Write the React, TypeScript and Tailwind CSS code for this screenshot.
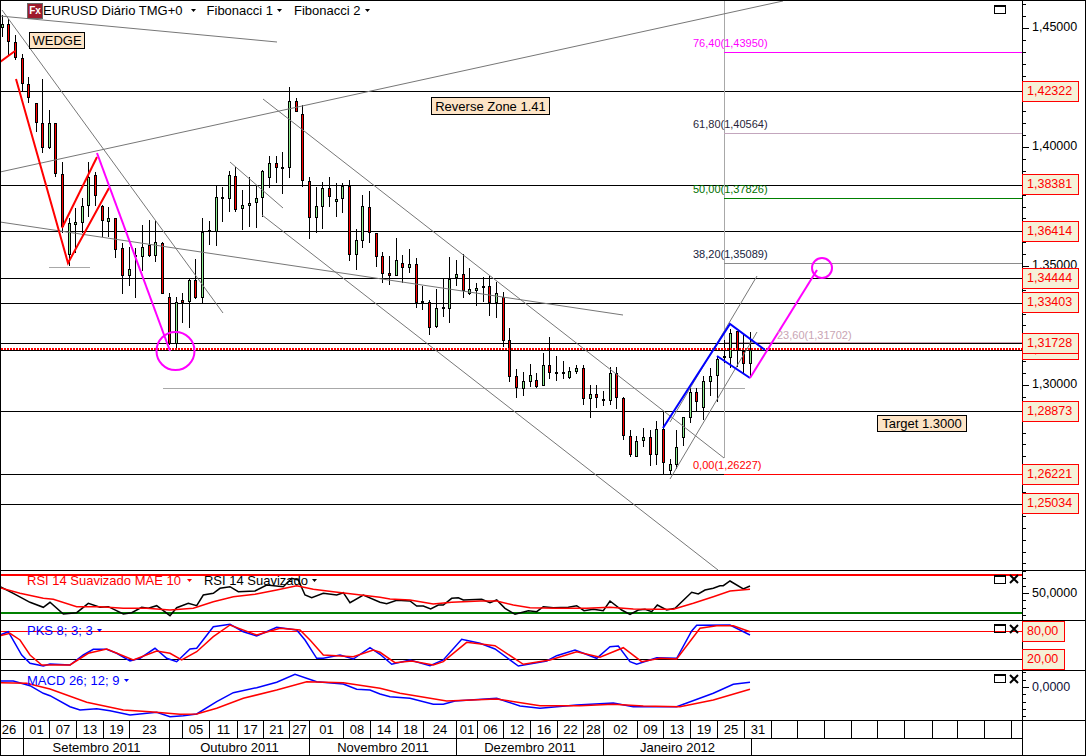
// EURUSD daily chart: main pane, three indicator panes, price axis and date rows

type Candle = [number, number, number, number, number, 'r' | 'g'];

// x, wick top, wick bottom, body top, body bottom, colour
const candles: Candle[] = [
  [2, 15, 37, 24, 28, 'g'], [8, 19, 55, 24, 42, 'r'], [15, 35, 60, 42, 58, 'r'], [22, 54, 92, 58, 84, 'r'],
  [28, 77, 103, 84, 98, 'r'], [36, 103, 132, 103, 123, 'r'], [42, 79, 153, 123, 148, 'r'], [49, 110, 149, 123, 148, 'g'],
  [55, 123, 177, 123, 174, 'r'], [62, 162, 233, 174, 227, 'r'], [69, 218, 266, 223, 255, 'g'], [75, 208, 253, 222, 225, 'g'],
  [82, 198, 233, 206, 223, 'g'], [88, 162, 217, 177, 206, 'g'], [95, 172, 206, 175, 196, 'r'], [102, 205, 237, 206, 221, 'r'],
  [108, 207, 237, 218, 222, 'g'], [115, 218, 258, 218, 250, 'r'], [122, 243, 294, 248, 276, 'r'], [129, 247, 286, 269, 276, 'g'],
  [135, 248, 298, 255, 257, 'r'], [142, 225, 271, 247, 257, 'g'], [149, 220, 257, 245, 256, 'r'], [155, 221, 262, 242, 256, 'g'],
  [162, 242, 294, 243, 294, 'r'], [169, 293, 345, 297, 344, 'r'], [176, 297, 350, 302, 344, 'g'], [182, 293, 323, 300, 303, 'r'],
  [189, 278, 328, 280, 302, 'g'], [195, 259, 299, 280, 298, 'r'], [202, 218, 303, 232, 298, 'g'], [209, 221, 245, 230, 232, 'r'],
  [216, 186, 246, 197, 232, 'g'], [222, 187, 222, 197, 199, 'r'], [229, 171, 212, 175, 199, 'g'], [235, 167, 212, 176, 210, 'r'],
  [242, 190, 230, 205, 209, 'g'], [249, 177, 227, 203, 206, 'g'], [256, 185, 228, 198, 203, 'g'], [262, 170, 217, 171, 198, 'g'],
  [269, 156, 188, 163, 178, 'g'], [276, 156, 183, 163, 168, 'r'], [282, 152, 194, 167, 169, 'r'], [289, 87, 178, 101, 168, 'g'],
  [296, 98, 112, 101, 112, 'r'], [302, 105, 187, 114, 181, 'r'], [309, 177, 239, 181, 218, 'r'], [316, 187, 233, 206, 218, 'g'],
  [322, 182, 229, 188, 207, 'g'], [329, 177, 207, 188, 197, 'r'], [336, 183, 217, 199, 202, 'g'], [342, 183, 213, 186, 199, 'g'],
  [349, 180, 261, 186, 255, 'r'], [356, 229, 270, 240, 255, 'g'], [362, 195, 248, 206, 241, 'g'], [369, 191, 243, 207, 233, 'r'],
  [376, 233, 267, 233, 257, 'r'], [382, 252, 283, 256, 274, 'r'], [389, 256, 285, 273, 276, 'r'], [396, 238, 276, 260, 276, 'g'],
  [402, 255, 283, 263, 268, 'r'], [409, 249, 273, 264, 268, 'g'], [416, 258, 308, 264, 303, 'r'], [422, 286, 310, 301, 303, 'g'],
  [429, 300, 335, 302, 328, 'r'], [436, 289, 328, 308, 327, 'g'], [443, 278, 317, 307, 309, 'r'], [449, 257, 323, 279, 309, 'g'],
  [456, 260, 286, 274, 278, 'g'], [463, 254, 298, 274, 291, 'r'], [469, 268, 295, 289, 294, 'g'], [476, 283, 306, 288, 291, 'g'],
  [483, 277, 302, 286, 288, 'g'], [489, 276, 316, 286, 303, 'r'], [496, 282, 318, 293, 303, 'g'], [503, 292, 347, 297, 341, 'r'],
  [509, 328, 382, 340, 377, 'r'], [516, 369, 398, 376, 388, 'r'], [523, 372, 396, 381, 389, 'g'], [530, 364, 387, 375, 382, 'g'],
  [536, 373, 388, 380, 387, 'r'], [543, 353, 386, 365, 386, 'g'], [549, 337, 379, 365, 373, 'r'], [556, 356, 381, 372, 374, 'g'],
  [563, 361, 379, 372, 374, 'r'], [569, 367, 379, 371, 378, 'g'], [576, 365, 374, 368, 372, 'g'], [583, 365, 405, 368, 399, 'r'],
  [590, 385, 418, 394, 399, 'g'], [596, 385, 408, 394, 398, 'r'], [603, 391, 406, 399, 401, 'g'], [610, 367, 405, 373, 401, 'g'],
  [616, 367, 409, 373, 398, 'r'], [623, 397, 440, 398, 436, 'r'], [630, 430, 457, 436, 455, 'r'], [636, 436, 457, 441, 457, 'g'],
  [643, 428, 447, 437, 441, 'g'], [650, 430, 466, 437, 455, 'r'], [656, 421, 465, 429, 455, 'g'], [663, 412, 474, 429, 463, 'r'],
  [670, 459, 474, 464, 471, 'g'], [676, 430, 469, 447, 465, 'g'], [683, 417, 446, 417, 438, 'g'], [690, 388, 423, 392, 418, 'g'],
  [696, 388, 411, 392, 402, 'r'], [703, 376, 420, 381, 408, 'g'], [710, 368, 396, 376, 382, 'g'], [717, 356, 402, 359, 376, 'g'],
  [724, 340, 363, 356, 358, 'g'], [730, 329, 368, 333, 358, 'g'], [737, 331, 367, 331, 351, 'r'], [743, 335, 373, 351, 364, 'r'],
  [750, 332, 378, 350, 364, 'g'],
];

const blackLevels = [91, 185, 231, 278, 303, 343, 350, 411, 504];

const trendLines = [
  [0, 16, 277, 42], [2, 10, 223, 313], [0, 172, 783, 1], [0, 222, 623, 315], [263, 99, 724, 458],
  [230, 162, 283, 208], [262, 215, 718, 570], [670, 422, 757, 276], [670, 479, 757, 332],
];

const fibLines = [
  { y: 52, color: '#ff00ff' },
  { y: 133, color: '#c3a6bd' },
  { y: 198, color: '#008000' },
  { y: 263, color: '#8a8a8a' },
  { y: 342, color: '#c9a5b4' },
  { y: 474, color: '#ff0000' },
];

// drawn in the zoom crops at 3x, so x and y get divided back down
const toPoints = (raw: number[][], panelTop: number) =>
  raw.map(([x, y]) => `${(x / 3).toFixed(1)},${(panelTop + y / 3).toFixed(1)}`).join(' ');

const shift = (raw: number[][]) => raw.map(([x, y]) => [x + 1140, y]);

const rsiBlack = [
  [0, 65], [40, 85], [90, 112], [130, 127], [150, 112], [190, 147], [230, 143], [265, 115], [300, 127], [325, 125],
  [370, 147], [395, 143], [425, 127], [445, 130], [470, 122], [510, 152], [530, 128], [565, 115], [590, 122], [610, 90],
  [640, 85], [660, 70], [690, 65], [715, 80], [765, 78], [800, 60], [850, 65], [875, 40], [895, 45], [915, 90],
  [935, 98], [970, 85], [1010, 90], [1030, 83], [1050, 113], [1090, 90], [1140, 112],
  ...shift([
    [20, 116], [50, 106], [90, 108], [110, 123], [130, 123], [152, 132], [175, 120], [190, 120], [215, 100], [235, 98],
    [250, 105], [305, 103], [330, 113], [350, 105], [375, 130], [405, 148], [445, 137], [470, 140], [490, 125], [520, 128],
    [565, 127], [590, 122], [612, 137], [640, 133], [670, 137], [690, 108], [725, 135], [750, 148], [775, 135], [795, 133],
    [815, 140], [832, 120], [860, 135], [885, 130], [935, 82], [955, 87], [975, 75], [1000, 70], [1020, 62], [1030, 62],
    [1050, 48], [1090, 72], [1110, 63],
  ]),
];
const rsiRed = [
  [0, 68], [60, 85], [130, 100], [160, 103], [230, 125], [300, 125], [370, 130], [440, 130], [510, 135], [580, 130],
  [640, 110], [700, 95], [765, 88], [830, 75], [890, 62], [940, 73], [1000, 80], [1140, 97],
  ...shift([
    [30, 102], [90, 105], [160, 117], [215, 112], [300, 108], [350, 108], [400, 120], [450, 128], [530, 130], [620, 130],
    [690, 127], [760, 132], [830, 133], [880, 133], [940, 115], [1000, 95], [1050, 78], [1110, 73],
  ]),
];
const pksBlue = [
  [0, 210], [25, 200], [45, 235], [65, 270], [90, 295], [130, 303], [150, 297], [210, 300], [250, 270], [280, 253],
  [320, 253], [350, 265], [390, 288], [420, 280], [465, 250], [500, 280], [530, 290], [570, 252], [590, 250], [640, 185],
  [690, 178], [730, 200], [770, 213], [830, 187], [890, 195], [915, 225], [950, 280], [970, 280], [1020, 270], [1060, 282],
  [1110, 248], [1140, 268],
  ...shift([
    [35, 298], [90, 285], [150, 302], [190, 285], [245, 223], [300, 235], [345, 252], [415, 303], [500, 288], [530, 272],
    [585, 255], [650, 280], [690, 245], [715, 243], [750, 290], [770, 298], [830, 278], [890, 280], [935, 198], [950, 181],
    [1050, 180], [1110, 210],
  ]),
];
const pksRed = [
  [0, 212], [30, 205], [60, 225], [90, 270], [125, 300], [210, 300], [265, 265], [320, 252], [400, 285], [470, 258],
  [510, 265], [545, 285], [590, 260], [640, 215], [690, 180], [770, 210], [840, 190], [900, 195], [930, 225], [970, 270],
  [1060, 275], [1120, 255], [1140, 262],
  ...shift([
    [45, 293], [95, 288], [160, 300], [190, 290], [260, 232], [345, 242], [430, 298], [510, 285], [590, 260], [660, 277],
    [730, 248], [785, 290], [840, 280], [890, 282], [960, 190], [1010, 182], [1060, 182], [1110, 200],
  ]),
];
const macdBlue = [
  [0, 348], [40, 348], [90, 362], [130, 385], [150, 392], [210, 425], [240, 435], [290, 431], [330, 437], [390, 450],
  [470, 442], [510, 455], [550, 452], [590, 447], [650, 410], [700, 383], [770, 368], [830, 352], [885, 328], [950, 350],
  [1030, 357], [1070, 373], [1110, 375], [1140, 387],
  ...shift([
    [30, 395], [90, 400], [160, 418], [190, 418], [225, 408], [350, 400], [420, 423], [480, 430], [590, 420], [700, 414],
    [760, 425], [890, 425], [1000, 385], [1060, 358], [1110, 352],
  ]),
];
const macdRed = [
  [0, 353], [80, 355], [150, 372], [260, 412], [370, 435], [450, 440], [540, 448], [590, 447], [650, 430], [730, 400],
  [830, 375], [920, 350], [1030, 353], [1140, 370],
  ...shift([
    [60, 385], [200, 408], [350, 402], [480, 422], [600, 422], [700, 418], [790, 423], [900, 425], [1000, 405], [1110, 373],
  ]),
];

const dates = [
  ['26', 'w-[23px] pr-[6px]'], ['01', 'w-[26px]'], ['07', 'w-[27px]'], ['13', 'w-[27px]'], ['19', 'w-[26px]'], ['23', 'w-[40px]'],
  ['', 'w-[13px]'], ['05', 'w-[27px]'], ['11', 'w-[28px]'], ['17', 'w-[26px]'], ['21', 'w-[26px]'], ['27', 'w-[20px]'],
  ['01', 'w-[34px]'], ['08', 'w-[27px]'], ['14', 'w-[27px]'], ['18', 'w-[26px]'], ['24', 'w-[33px]'], ['01', 'w-[21px]'],
  ['06', 'w-[26px]'], ['12', 'w-[27px]'], ['16', 'w-[27px]'], ['22', 'w-[26px]'], ['28', 'w-[20px]'], ['02', 'w-[34px]'],
  ['09', 'w-[26px]'], ['13', 'w-[27px]'], ['19', 'w-[27px]'], ['25', 'w-[27px]'], ['31', 'w-[27px]'], ['', 'w-[26px]'],
  ['', 'w-[27px]'], ['', 'w-[27px]'], ['', 'w-[26px]'], ['', 'w-[27px]'], ['', 'w-[28px]'], ['', 'w-[25px]'], ['', 'w-[27px]'], ['', 'w-[27px]'],
];

const months = [
  ['', 'w-[23px]'], ['Setembro 2011', 'w-[146px]'], ['Outubro 2011', 'w-[140px]'], ['Novembro 2011', 'w-[147px]'],
  ['Dezembro 2011', 'w-[147px]'], ['Janeiro 2012', 'w-[148px]'],
];

const priceTags = [
  { text: '1,42322', pos: 'top-[80px]' },
  { text: '1,38381', pos: 'top-[173px]' },
  { text: '1,36414', pos: 'top-[220px]' },
  { text: '1,33403', pos: 'top-[291px]' },
  { text: '1,34444', pos: 'top-[267px]' },
  { text: '1,31122', pos: 'top-[338px]' },
  { text: '1,31728', pos: 'top-[332px]' },
  { text: '1,28873', pos: 'top-[400px]' },
  { text: '1,26221', pos: 'top-[463px]' },
  { text: '1,25034', pos: 'top-[492px]' },
];

const axisLabels = [
  { text: '1,45000', pos: 'top-[20px]' },
  { text: '1,40000', pos: 'top-[139px]' },
  { text: '1,35000', pos: 'top-[258px]' },
  { text: '1,30000', pos: 'top-[377px]' },
];

const fibLabels = [
  { text: '76,40(1,43950)', cls: 'left-[692px] top-[37px] text-[#ff00ff]' },
  { text: '61,80(1,40564)', cls: 'left-[692px] top-[118px] text-[#2a1f3a]' },
  { text: '50,00(1,37826)', cls: 'left-[692px] top-[183px] text-[#007000]' },
  { text: '38,20(1,35089)', cls: 'left-[692px] top-[248px] text-[#16233e]' },
  { text: '23,60(1,31702)', cls: 'left-[776px] top-[329px] text-[#c9a5b4]' },
  { text: '0,00(1,26227)', cls: 'left-[692px] top-[459px] text-[#ff0000]' },
];

const noteBoxes = [
  { text: 'WEDGE', cls: 'left-[28px] top-[31px] w-[56px] h-[17px]' },
  { text: 'Reverse Zone 1.41', cls: 'left-[430px] top-[96px] w-[119px] h-[18px]' },
  { text: 'Target 1.3000', cls: 'left-[876px] top-[414px] w-[90px] h-[17px]' },
];

const Caret = ({ color = '#000000', gap = 'ml-[4px] mr-[11px]' }: { color?: string; gap?: string }) => (
  <svg width="6" height="4" viewBox="0 0 6 4" className={gap}>
    <path d="M0 0H5L2.5 3Z" fill={color} />
  </svg>
);

const WindowBox = ({ top }: { top: string }) => (
  <div className={`absolute left-[993px] w-[12px] h-[9px] border border-black border-t-2 ${top}`} />
);

const CloseMark = () => (
  <svg width="10" height="10" viewBox="0 0 10 10" className="absolute left-[1008px] top-[3px]">
    <path d="M1 1L9 9M9 1L1 9" stroke="#000000" strokeWidth="2" />
  </svg>
);

const PriceTag = ({ text, pos }: { text: string; pos: string }) => (
  <div className={`absolute -left-px h-[21px] w-[57px] border border-[#ff0000] flex items-center pl-[4px] text-[12.5px] text-[#ff0000] bg-[#f5f1d8] ${pos}`}>
    {text}
  </div>
);

// first tick is far above the pane so the major one lands where the axis needs it
const Ticks = ({ from, step, major, height }: { from: number; step: number; major: number; height: number }) => {
  const ys: number[] = [];
  for (let y = from; y <= height - 3; y += step) ys.push(y);
  return (
    <svg width="10" height={height} className="absolute left-0 top-0" shapeRendering="crispEdges">
      {ys.map((y, i) => (
        <rect key={i} x="0" y={Math.round(y)} width={i % major === 0 ? 6 : 3} height="1" fill="#000000" />
      ))}
    </svg>
  );
};

const MainChart = () => (
  <svg width="1021" height="569" viewBox="1 1 1021 569" className="absolute inset-0">
    <g shapeRendering="crispEdges">
      {blackLevels.map((y) => (
        <rect key={y} x="1" y={y} width="1021" height="1" fill="#000000" />
      ))}
      <rect x="1" y="474" width="723" height="1" fill="#000000" />
      <rect x="163" y="388" width="582" height="1" fill="#a8a8a8" />
      <rect x="49" y="267" width="41" height="1" fill="#a8a8a8" />
      <rect x="724" y="1" width="1" height="457" fill="#a8a8a8" />
      {fibLines.map((f) => (
        <rect key={f.y} x="724" y={f.y} width="298" height="1" fill={f.color} />
      ))}
      {candles.map(([x, hi, lo, top, bottom, c], i) => (
        <g key={i}>
          <rect x={x} y={hi} width="1" height={lo - hi} fill="#000000" />
          <rect x={x - 1} y={top} width="3" height={Math.max(bottom - top, 2)} fill="#000000" />
          {bottom - top > 2 && (
            <rect x={x} y={top + 1} width="1" height={bottom - top - 2} fill={c === 'r' ? '#ff0000' : '#90ee90'} />
          )}
        </g>
      ))}
      <line x1="1" y1="349" x2="1022" y2="349" stroke="#ff0000" strokeWidth="2" strokeDasharray="2 1" />
    </g>
    {trendLines.map(([x1, y1, x2, y2], i) => (
      <line key={i} x1={x1} y1={y1} x2={x2} y2={y2} stroke="#777777" strokeWidth="1" />
    ))}
    <g fill="none" strokeWidth="2">
      <polyline points="0,62 15,51" stroke="#ff0000" />
      <polyline points="16,79 68,263 109,188" stroke="#ff0000" />
      <polyline points="62,228 97,157" stroke="#ff0000" />
      <polyline points="97,153 170,351" stroke="#ff00ff" />
      <circle cx="175.5" cy="351" r="19" stroke="#ff00ff" />
      <polyline points="663,428 730,324 765,350" stroke="#0000ff" />
      <polyline points="717,356 750,378" stroke="#0000ff" />
      <polyline points="750,378 817,270" stroke="#ff00ff" />
      <circle cx="822" cy="268" r="10" stroke="#ff00ff" />
    </g>
  </svg>
);

export default function App() {
  return (
    <div className="w-[1086px] h-[756px] flex flex-col border border-black bg-white text-black text-[13px] leading-none font-['Liberation_Sans',Arial,sans-serif] overflow-hidden">
      {/* main pane */}
      <div className="flex h-[569px] shrink-0">
        <div className="relative w-[1021px]">
          <MainChart />
          <div className="absolute left-[26px] top-[2px] w-[16px] h-[16px] flex items-center justify-center bg-[#9e1b2c] border border-[#6b6b6b] text-white text-[10px] font-bold">
            Fx
          </div>
          <div className="absolute left-[42px] top-[2px] h-[15px] flex items-center whitespace-nowrap">
            <span>EURUSD Diário TMG+0</span>
            <Caret gap="ml-[8px] mr-[10px]" />
            <span>Fibonacci 1</span>
            <Caret />
            <span>Fibonacci 2</span>
            <Caret />
          </div>
          {noteBoxes.map((b) => (
            <div
              key={b.text}
              className={`absolute flex items-center justify-center border border-black bg-[#fde4c6] whitespace-nowrap ${b.cls}`}
            >
              {b.text}
            </div>
          ))}
          {fibLabels.map((f) => (
            <span key={f.text} className={`absolute whitespace-nowrap text-[11px] ${f.cls}`}>
              {f.text}
            </span>
          ))}
          <WindowBox top="top-[4px]" />
        </div>
        <div className="relative flex-1 border-l border-black text-[12.5px]">
          <Ticks from={-92} step={11.9} major={10} height={569} />
          {axisLabels.map((a) => (
            <span key={a.text} className={`absolute left-[9px] ${a.pos}`}>
              {a.text}
            </span>
          ))}
          {priceTags.map((t) => (
            <PriceTag key={t.text} text={t.text} pos={t.pos} />
          ))}
        </div>
      </div>

      {/* RSI */}
      <div className="flex h-[50px] shrink-0 border-t border-black">
        <div className="relative w-[1021px]">
          <svg width="1021" height="49" viewBox="1 571 1021 49" className="absolute inset-0">
            <rect x="1" y="574" width="1021" height="2" fill="#ff0000" />
            <rect x="1" y="612" width="1021" height="2" fill="#008000" />
            <polyline points={toPoints(rsiBlack, 565)} fill="none" stroke="#000000" strokeWidth="1.5" />
            <polyline points={toPoints(rsiRed, 565)} fill="none" stroke="#ff0000" strokeWidth="1.5" />
          </svg>
          <div className="absolute left-[26px] top-[3px] flex items-center whitespace-nowrap">
            <span className="text-[#ff0000]">RSI 14 Suavizado MAE 10</span>
            <Caret color="#ff0000" gap="ml-[6px] mr-[11px]" />
            <span>RSI 14 Suavizado</span>
            <Caret />
          </div>
          <WindowBox top="top-[4px]" />
          <CloseMark />
        </div>
        <div className="relative flex-1 border-l border-black text-[12.5px]">
          <Ticks from={-200} step={7.4} major={30} height={49} />
          <span className="absolute left-[9px] top-[16px]">50,0000</span>
        </div>
      </div>

      {/* PKS */}
      <div className="flex h-[50px] shrink-0 border-t border-black">
        <div className="relative w-[1021px]">
          <svg width="1021" height="49" viewBox="1 621 1021 49" className="absolute inset-0">
            <rect x="1" y="631" width="1021" height="1" fill="#ff0000" />
            <rect x="1" y="659" width="1021" height="1" fill="#000000" />
            <polyline points={toPoints(pksBlue, 565)} fill="none" stroke="#0000ff" strokeWidth="1.5" />
            <polyline points={toPoints(pksRed, 565)} fill="none" stroke="#ff0000" strokeWidth="1.5" />
          </svg>
          <div className="absolute left-[26px] top-[3px] flex items-center whitespace-nowrap text-[#0000ff]">
            <span>PKS 8; 3; 3</span>
            <Caret color="#0000ff" />
          </div>
          <WindowBox top="top-[3px]" />
          <CloseMark />
        </div>
        <div className="relative flex-1 border-l border-black text-[12.5px]">
          <div className="absolute -left-px top-0 h-[21px] w-[43px] border border-[#ff0000] flex items-center pl-[4px] text-[#ff0000] bg-[#f5f1d8]">
            80,00
          </div>
          <div className="absolute -left-px top-[28px] h-[21px] w-[43px] border border-[#ff0000] flex items-center pl-[4px] text-[#ff0000] bg-[#f5f1d8]">
            20,00
          </div>
        </div>
      </div>

      {/* MACD */}
      <div className="flex h-[50px] shrink-0 border-t border-black">
        <div className="relative w-[1021px]">
          <svg width="1021" height="49" viewBox="1 671 1021 49" className="absolute inset-0">
            <polyline points={toPoints(macdBlue, 565)} fill="none" stroke="#0000ff" strokeWidth="1.5" />
            <polyline points={toPoints(macdRed, 565)} fill="none" stroke="#ff0000" strokeWidth="1.5" />
          </svg>
          <div className="absolute left-[26px] top-[3px] flex items-center whitespace-nowrap text-[#0000ff]">
            <span>MACD 26; 12; 9</span>
            <Caret color="#0000ff" />
          </div>
          <WindowBox top="top-[3px]" />
          <CloseMark />
        </div>
        <div className="relative flex-1 border-l border-black text-[12.5px]">
          <Ticks from={-203} step={7.3} major={30} height={49} />
          <span className="absolute left-[9px] top-[10px] text-[#10103a]">0,0000</span>
        </div>
      </div>

      {/* date rows */}
      <div className="flex flex-1 border-t border-black">
        <div className="w-[1021px] flex flex-col">
          <div className="flex h-[18px] border-b border-black">
            {dates.map(([label, w], i) => (
              <div key={i} className={`flex items-center justify-center border-r border-black ${w}`}>
                {label}
              </div>
            ))}
          </div>
          <div className="flex flex-1">
            {months.map(([label, w]) => (
              <div key={label || 'blank'} className={`flex items-center justify-center border-r border-black ${w}`}>
                {label}
              </div>
            ))}
          </div>
        </div>
        <div className="flex-1 border-l border-black" />
      </div>
    </div>
  );
}
